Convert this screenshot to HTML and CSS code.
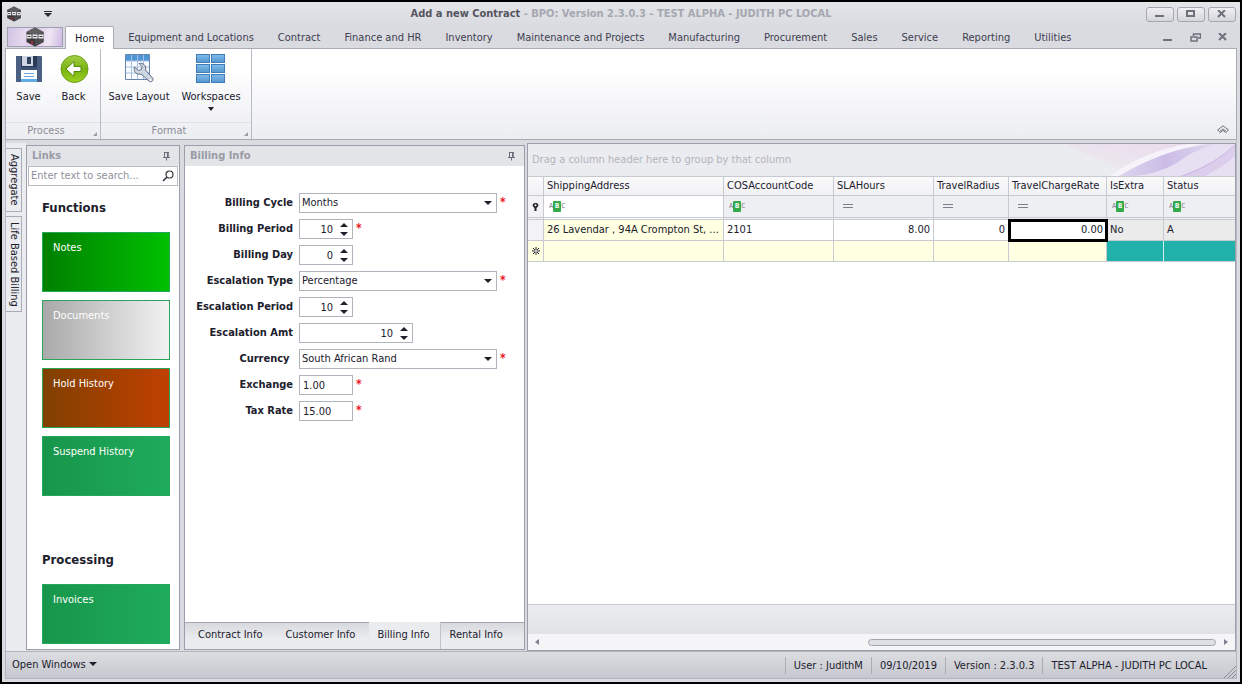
FILE: index.html
```html
<!DOCTYPE html>
<html lang="en">
<head>
    <meta charset="UTF-8">
    <meta name="viewport" content="width=device-width, initial-scale=1.0">
    <title>Add a new Contract - BPO</title>
    <link rel="stylesheet" href="styles.css">
</head>
<body>
    <!-- shared icons -->
    <svg class="defs" width="0" height="0">
        <symbol id="logo" viewBox="0 0 20 20">
            <path d="M10 0.5 18.5 5v10L10 19.5 1.5 15V5z" fill="#3a3a3c"/>
            <path d="M10 0.5 18.5 5 10 9 1.5 5z" fill="#606063"/>
            <path d="M10 9 18.5 5v10L10 19.5z" fill="#4b4b4e"/>
            <path d="M1.500 7.500h5v4h-5zM7.500 7.500h5v4h-5zM13.500 7.500h5v4h-5z" fill="#e8e8ea"/>
            <path d="M2.500 9h3v1h-3zM8.500 9h3v1h-3zM14.500 9h3v1h-3z" fill="#3a3a3c"/>
            <path d="M6 14l2 3M8 14l-2 3" stroke="#a83038" stroke-width="1.200"/>
        </symbol>
        <symbol id="pin" viewBox="0 0 9 9">
            <path d="M2 .5h5M2.500 .5v5M6 .5v5M1 5.500h7M4.500 5.500v3" fill="none" stroke="#6a6d7a"/>
            <path d="M5 1h1.500v4H5z" fill="#6a6d7a"/>
        </symbol>
        <symbol id="equals" viewBox="0 0 10 5">
            <path d="M0 .5h10M0 3.500h10" stroke="#7d808c"/>
        </symbol>
    </svg>

    <div class="window">
        <header class="titlebar">
            <div class="quick-access">
                <svg width="16" height="16"><use href="#logo"/></svg>
                <button class="icon-btn" aria-label="Customize toolbar"><svg width="8" height="6" viewBox="0 0 8 6"><path d="M0 0h8v1H0zM0 2h8L4 6z" fill="#2b2b35"/></svg></button>
            </div>
            <h1 class="title">Add a new Contract <span>- BPO: Version 2.3.0.3 - TEST ALPHA - JUDITH PC LOCAL</span></h1>
            <div class="window-buttons">
                <button aria-label="Minimize"><svg width="10" height="8" viewBox="0 0 10 8"><path d="M0 5h9v2H0z" fill="#6e717c"/></svg></button>
                <button aria-label="Maximize"><svg width="10" height="8" viewBox="0 0 10 8"><path d="M1 1h7v5H1z" fill="none" stroke="#6e717c" stroke-width="2"/></svg></button>
                <button aria-label="Close"><svg width="10" height="8" viewBox="0 0 10 8"><path d="M1 0l7 7M8 0L1 7" stroke="#6e717c" stroke-width="2"/></svg></button>
            </div>
        </header>

        <nav class="ribbon-tabs">
            <button class="app-button" aria-label="BPO"><svg width="20" height="20"><use href="#logo"/></svg></button>
            <button class="ribbon-tab active">Home</button>
            <button class="ribbon-tab">Equipment and Locations</button>
            <button class="ribbon-tab">Contract</button>
            <button class="ribbon-tab">Finance and HR</button>
            <button class="ribbon-tab">Inventory</button>
            <button class="ribbon-tab">Maintenance and Projects</button>
            <button class="ribbon-tab">Manufacturing</button>
            <button class="ribbon-tab">Procurement</button>
            <button class="ribbon-tab">Sales</button>
            <button class="ribbon-tab">Service</button>
            <button class="ribbon-tab">Reporting</button>
            <button class="ribbon-tab">Utilities</button>
            <div class="mdi-buttons">
                <button class="icon-btn" aria-label="Minimize document"><svg width="10" height="9" viewBox="0 0 10 9"><path d="M0 6h9v2H0z" fill="#6e717c"/></svg></button>
                <button class="icon-btn" aria-label="Restore document"><svg width="11" height="9" viewBox="0 0 11 9"><path d="M3.500 3V1h7v4H8M1 4h6v4H1z" fill="none" stroke="#6e717c" stroke-width="1.500"/></svg></button>
                <button class="icon-btn" aria-label="Close document"><svg width="10" height="8" viewBox="0 0 10 8"><path d="M1 0l7 7M8 0L1 7" stroke="#6e717c" stroke-width="2"/></svg></button>
            </div>
        </nav>

        <section class="ribbon">
            <div class="ribbon-group process">
                <div class="ribbon-items">
                    <button class="ribbon-item">
                        <svg width="32" height="32" viewBox="0 0 32 32">
                            <path d="M3 3h25l1 1v25H3z" fill="#3e5274"/>
                            <path d="M3 3h5v26H3zM24 3h4l1 1v25h-5z" fill="#4b5f82"/>
                            <path d="M8 3h16v11H8z" fill="#2b3a55"/>
                            <path d="M9 3h11v10H9z" fill="#cdd6e2"/>
                            <path d="M14 4h4v7h-4z" fill="#33425e"/>
                            <path d="M8 17h16v12H8z" fill="#fbfcfe"/>
                            <path d="M8 26h16v3H8z" fill="#60ace4"/>
                            <path d="M11 20.500h10M11 23.500h10" stroke="#6fa5dc"/>
                        </svg>
                        <span>Save</span>
                    </button>
                    <button class="ribbon-item">
                        <svg width="32" height="32" viewBox="0 0 32 32">
                            <defs><linearGradient id="green" x1="0" y1="0" x2="0" y2="1"><stop offset="0" stop-color="#a5cf45"/><stop offset=".5" stop-color="#79b312"/><stop offset="1" stop-color="#9bd020"/></linearGradient></defs>
                            <circle cx="16.500" cy="16" r="13.500" fill="url(#green)" stroke="#6b9f1c"/>
                            <path d="M8 16l8-7.500v5h7v5h-7v5z" fill="#fff" stroke="#55870d" stroke-linejoin="round"/>
                        </svg>
                        <span>Back</span>
                    </button>
                </div>
                <div class="group-caption">Process</div>
            </div>
            <div class="ribbon-group format">
                <div class="ribbon-items">
                    <button class="ribbon-item wide">
                        <svg width="32" height="32" viewBox="0 0 32 32">
                            <path d="M2.500 1.500h24v25h-24z" fill="#f7faff" stroke="#6884ad"/>
                            <path d="M3 2h23v6H3z" fill="#4f97d4"/>
                            <path d="M3 8h23M3 14h23M3 20h23M8.500 2v24M14.500 2v24M20.500 2v24" stroke="#a9c0e0"/>
                            <path d="M16 10.500c4-1 7.500 2 6.500 6.500l7 8c1.800 2.500-1.500 5-3.500 3l-8-7c-4 1-8-2-6.500-7l4 3.500 3-1 .5-3z" fill="#cdd5e1" stroke="#5f6e85" stroke-linejoin="round"/>
                            <circle cx="27.500" cy="27" r="1" fill="#fff"/>
                        </svg>
                        <span>Save Layout</span>
                    </button>
                    <button class="ribbon-item wide">
                        <svg width="32" height="32" viewBox="0 0 32 32">
                            <defs><linearGradient id="blue" x1="0" y1="0" x2="0" y2="1"><stop offset="0" stop-color="#82bdea"/><stop offset="1" stop-color="#5496d0"/></linearGradient></defs>
                            <g fill="url(#blue)" stroke="#3f7cb8">
                                <rect x="1.500" y="1.500" width="13" height="8"/><rect x="16.500" y="1.500" width="13" height="8"/>
                                <rect x="1.500" y="11.500" width="13" height="8"/><rect x="16.500" y="11.500" width="13" height="8"/>
                                <rect x="1.500" y="21.500" width="13" height="8"/><rect x="16.500" y="21.500" width="13" height="8"/>
                            </g>
                        </svg>
                        <span>Workspaces</span>
                        <i class="caret"></i>
                    </button>
                </div>
                <div class="group-caption">Format</div>
            </div>
            <button class="icon-btn collapse" aria-label="Collapse the ribbon"><svg width="12" height="9" viewBox="0 0 12 9"><path d="M.5 5L6 .8 11.500 5 9.500 6.500 6 4 2.500 6.500zM2.500 8L6 5.500 9.500 8" fill="none" stroke="#70737e"/></svg></button>
        </section>

        <main class="workspace">
            <div class="side-tabs">
                <button class="side-tab">Aggregate</button>
                <button class="side-tab">Life Based Billing</button>
            </div>

            <aside class="panel links">
                <div class="panel-head"><h2>Links</h2><svg width="9" height="9"><use href="#pin"/></svg></div>
                <div class="search">
                    <input type="text" placeholder="Enter text to search..." aria-label="Search links">
                    <svg width="12" height="12" viewBox="0 0 12 12"><circle cx="7.500" cy="4.500" r="3.500" fill="none" stroke="#33333d" stroke-width="1.200"/><path d="M5 7L1 11" stroke="#33333d" stroke-width="1.600"/></svg>
                </div>
                <div class="links-body">
                    <h3>Functions</h3>
                    <div class="tiles">
                        <button class="tile notes">Notes</button>
                        <button class="tile documents">Documents</button>
                        <button class="tile hold">Hold History</button>
                        <button class="tile">Suspend History</button>
                    </div>
                    <h3>Processing</h3>
                    <div class="tiles">
                        <button class="tile">Invoices</button>
                    </div>
                </div>
            </aside>

            <section class="panel billing">
                <div class="panel-head"><h2>Billing Info</h2><svg width="9" height="9"><use href="#pin"/></svg></div>
                <form class="billing-form">
                    <div class="field required">
                        <label for="cycle">Billing Cycle</label>
                        <div class="combo"><select id="cycle"><option>Months</option></select></div>
                    </div>
                    <div class="field required">
                        <label for="period">Billing Period</label>
                        <div class="spin"><input id="period" type="number" value="10"></div>
                    </div>
                    <div class="field">
                        <label for="day">Billing Day</label>
                        <div class="spin"><input id="day" type="number" value="0"></div>
                    </div>
                    <div class="field required">
                        <label for="esc-type">Escalation Type</label>
                        <div class="combo"><select id="esc-type"><option>Percentage</option></select></div>
                    </div>
                    <div class="field">
                        <label for="esc-period">Escalation Period</label>
                        <div class="spin"><input id="esc-period" type="number" value="10"></div>
                    </div>
                    <div class="field">
                        <label for="esc-amt">Escalation Amt</label>
                        <div class="spin amount"><input id="esc-amt" type="number" value="10"></div>
                    </div>
                    <div class="field required">
                        <label for="currency">Currency&nbsp;</label>
                        <div class="combo"><select id="currency"><option>South African Rand</option></select></div>
                    </div>
                    <div class="field required">
                        <label for="exchange">Exchange</label>
                        <input class="short" id="exchange" type="text" value="1.00">
                    </div>
                    <div class="field required">
                        <label for="tax">Tax Rate</label>
                        <input class="short" id="tax" type="text" value="15.00">
                    </div>
                </form>
                <div class="page-tabs">
                    <button class="page-tab">Contract Info</button>
                    <button class="page-tab">Customer Info</button>
                    <button class="page-tab active">Billing Info</button>
                    <button class="page-tab last">Rental Info</button>
                </div>
            </section>

            <section class="grid">
                <div class="group-panel">
                    <span>Drag a column header here to group by that column</span>
                    <svg class="swoosh" width="170" height="32" viewBox="0 0 170 32">
                        <defs>
                            <linearGradient id="pink" x1="0" x2="1" y1="1" y2="0"><stop offset="0" stop-color="#ebecef"/><stop offset="1" stop-color="#ecd0ea"/></linearGradient>
                            <linearGradient id="violet" x1="0" x2="1" y1="0" y2="0"><stop offset="0" stop-color="#ddd6ef"/><stop offset=".5" stop-color="#cbbce6"/><stop offset="1" stop-color="#e0d8f0"/></linearGradient>
                        </defs>
                        <path d="M0 0h124Q84 10 56 26 30 14 0 0z" fill="url(#pink)" opacity=".6"/>
                        <path d="M44 32Q84 6 128 0h42v32z" fill="#e6e0f2"/>
                        <path d="M52 32Q90 6 150 0 128 6 112 19 92 30 70 32z" fill="url(#violet)"/>
                        <path d="M44 32Q82 6 124 0h14Q94 8 54 32z" fill="#f6f4fa"/>
                        <path d="M114 32Q148 22 170 2v10Q156 24 140 32z" fill="#dccdec"/>
                        <path d="M118 32Q150 20 170 1" fill="none" stroke="#c9b3e2" stroke-width="1"/>
                    </svg>
                </div>
                <div class="grid-body">
                    <table>
                        <colgroup>
                            <col class="c-mark"><col class="c-address"><col class="c-code"><col class="c-hours">
                            <col class="c-radius"><col class="c-rate"><col class="c-extra"><col>
                        </colgroup>
                        <thead>
                            <tr>
                                <th></th>
                                <th>ShippingAddress</th>
                                <th>COSAccountCode</th>
                                <th>SLAHours</th>
                                <th>TravelRadius</th>
                                <th>TravelChargeRate</th>
                                <th>IsExtra</th>
                                <th>Status</th>
                            </tr>
                            <tr class="filter-row">
                                <td class="mark"><svg width="7" height="8" viewBox="0 0 7 8"><path d="M3.500 0C6 0 7 2 6 3.500L4.500 5v3h-2V5L1 3.500C0 2 1 0 3.500 0z" fill="#22222c"/><circle cx="3.500" cy="2.200" r="1" fill="#fff"/></svg></td>
                                <td class="focused"><span class="abc">A<b>B</b>C</span></td>
                                <td><span class="abc">A<b>B</b>C</span></td>
                                <td><svg class="eq" width="10" height="5"><use href="#equals"/></svg></td>
                                <td><svg class="eq" width="10" height="5"><use href="#equals"/></svg></td>
                                <td><svg class="eq" width="10" height="5"><use href="#equals"/></svg></td>
                                <td><span class="abc">A<b>B</b>C</span></td>
                                <td><span class="abc">A<b>B</b>C</span></td>
                            </tr>
                        </thead>
                        <tbody>
                            <tr>
                                <td class="mark"></td>
                                <td class="editable">26 Lavendar , 94A Crompton St, ...</td>
                                <td>2101</td>
                                <td class="num">8.00</td>
                                <td class="num">0</td>
                                <td class="num current">0.00</td>
                                <td class="locked">No</td>
                                <td class="locked">A</td>
                            </tr>
                            <tr class="new-row">
                                <td class="mark"><svg width="8" height="8" viewBox="0 0 8 8"><path d="M4 0v8M0 4h8M1 1l6 6M7 1L1 7" stroke="#22222c"/><circle cx="4" cy="4" r="1" fill="#fff"/></svg></td>
                                <td></td><td></td><td></td><td></td><td></td>
                                <td class="teal"></td>
                                <td class="teal"></td>
                            </tr>
                        </tbody>
                    </table>
                </div>
                <div class="grid-footer"></div>
                <div class="scrollbar">
                    <i class="arrow left"></i>
                    <div class="track"><div class="thumb"></div></div>
                    <i class="arrow right"></i>
                </div>
            </section>
        </main>

        <footer class="statusbar">
            <button class="open-windows">Open Windows <i class="caret"></i></button>
            <div class="status-items">
                <span>User : JudithM</span>
                <span>09/10/2019</span>
                <span>Version : 2.3.0.3</span>
                <span>TEST ALPHA - JUDITH PC LOCAL</span>
            </div>
            <svg class="grip" width="12" height="12" viewBox="0 0 12 12"><path d="M0 12L12 0M4 12l8-8M8 12l4-4" stroke="#8b8e99"/></svg>
        </footer>
    </div>
</body>
</html>
```
FILE: styles.css
```css
* {
    box-sizing: border-box;
}

body {
    margin: 0;
    font-family: "DejaVu Sans Condensed", "DejaVu Sans", sans-serif;
    font-size: 11px;
    line-height: 14px;
    color: #20202c;
}

button,
input,
select {
    font: inherit;
    color: inherit;
    margin: 0;
    padding: 0;
    border: none;
    background: none;
    outline: none;
}

h1,
h2,
h3 {
    margin: 0;
    font-size: 11px;
}

svg {
    display: block;
    flex: none;
}

.defs {
    position: absolute;
}

.window {
    display: flex;
    flex-direction: column;
    height: 100vh;
    padding: 0 3px 3px;
    border: 2px solid #000;
    background: #dadbe0;
}

.caret {
    display: inline-block;
    border: 3px solid transparent;
    border-top: 4px solid #20202c;
    border-bottom: none;
}

.icon-btn {
    display: flex;
    align-items: center;
    justify-content: center;
}

/* title bar */
.titlebar {
    display: flex;
    align-items: center;
    height: 24px;
    margin: 0 -3px;
    padding: 0 4px;
    background: linear-gradient(#e4e5e9, #dadbe0);
}

.quick-access {
    display: flex;
    align-items: center;
    gap: 22px;
    width: 90px;
}

.title {
    flex: 1;
    text-align: center;
    color: #55565f;
    white-space: nowrap;
}

.title span {
    color: #a5a7b0;
}

.window-buttons {
    display: flex;
    gap: 3px;
}

.window-buttons button {
    display: flex;
    align-items: center;
    justify-content: center;
    width: 28px;
    height: 15px;
    border: 1px solid #a5a7b0;
    border-radius: 3px;
    background: linear-gradient(#f0f0f3, #d5d6db);
}

/* ribbon */
.ribbon-tabs {
    display: flex;
    height: 22px;
    padding-left: 2px;
    z-index: 1;
}

.app-button {
    display: flex;
    align-items: center;
    justify-content: center;
    width: 56px;
    height: 20px;
    margin: 1px 2px 0 0;
    border: 1px solid #a09db4;
    background: linear-gradient(100deg, #cfc2e4, #e6d9ee 30%, #dcc6e6 50%, #f0e6f4 75%, #cdb9e4);
}

.ribbon-tab {
    padding: 2px 12px 0;
    color: #3e3e50;
    white-space: nowrap;
}

.ribbon-tab.active {
    height: 23px;
    padding: 2px 9px 0;
    margin-right: 2px;
    border: 1px solid #a9abb5;
    border-bottom: none;
    border-radius: 2px 2px 0 0;
    background: #fff;
    color: #20202c;
}

.mdi-buttons {
    display: flex;
    gap: 17px;
    margin-left: auto;
    padding-right: 9px;
}

.ribbon {
    display: flex;
    height: 92px;
    border: 1px solid #a9abb5;
    background: linear-gradient(#fff 20%, #ecedf1);
}

.ribbon-group {
    display: flex;
    flex-direction: column;
    justify-content: space-between;
    position: relative;
    border-right: 1px solid #b9bbc4;
}

.ribbon-items {
    display: flex;
    padding: 4px 4px 0 0;
}

.ribbon-item {
    display: flex;
    flex-direction: column;
    align-items: center;
    width: 45px;
    white-space: nowrap;
}

.ribbon-item.wide {
    width: 72px;
}

.ribbon-item span {
    margin-top: 5px;
}

.ribbon-item .caret {
    margin-top: 3px;
}

.format .ribbon-items {
    padding-left: 2px;
}

.group-caption {
    padding-right: 14px;
    border-top: 1px solid #e0e1e6;
    text-align: center;
    line-height: 16px;
    color: #8c8e99;
}

.ribbon-group::after {
    content: "";
    position: absolute;
    right: 3px;
    bottom: 3px;
    border: 2px solid;
    border-color: transparent #9a9ca6 #9a9ca6 transparent;
}

.collapse {
    align-self: flex-end;
    margin: 0 7px 5px auto;
}

/* docked panels */
.workspace {
    display: flex;
    flex: 1;
    min-height: 0;
    padding-top: 3px;
    border-right: 1px solid #b9bbc4;
    border-left: 1px solid #b9bbc4;
    background: #dadbe0;
}

.side-tabs {
    display: flex;
    flex-direction: column;
    align-items: flex-start;
    gap: 4px;
    width: 20px;
    padding-top: 5px;
    background: #ebecef;
}

.side-tab {
    width: 16px;
    padding: 5px 0;
    border: 1px solid #a9abb5;
    border-left: none;
    writing-mode: vertical-rl;
    line-height: 14px;
    white-space: nowrap;
}

.panel {
    display: flex;
    flex-direction: column;
    flex: none;
    margin: 2px 4px 1px 0;
    border: 1px solid #9c9eac;
    background: #fff;
    overflow: hidden;
}

.panel-head {
    display: flex;
    align-items: center;
    justify-content: space-between;
    flex: none;
    height: 20px;
    padding: 0 8px 0 5px;
    background: #e3e4e8;
    color: #999ba6;
}

.links {
    width: 154px;
}

.search {
    display: flex;
    align-items: center;
    flex: none;
    height: 20px;
    margin: 0 1px;
    padding: 0 3px 0 2px;
    border: 1px solid #b9bbc4;
}

.search input {
    flex: 1;
    min-width: 0;
}

.search input::placeholder {
    color: #8f919c;
    opacity: 1;
}

.links-body {
    flex: 1;
    min-height: 0;
    padding: 12px 9px 0 15px;
}

.links-body h3 {
    font-size: 13px;
    line-height: 20px;
}

.tiles {
    display: grid;
    gap: 8px;
    margin: 14px 0 54px;
}

.tiles:last-child {
    margin-bottom: 0;
}

.tile {
    height: 60px;
    padding: 8px 10px;
    border: 1px solid #26a65b;
    background: linear-gradient(90deg, #17964a, #1fac5c);
    color: #fff;
    display: flex;
    align-items: flex-start;
}

.tile.notes {
    background: linear-gradient(90deg, #008000, #00c000);
}

.tile.documents {
    background: linear-gradient(90deg, #a9a9a9, #f2f2f2);
}

.tile.hold {
    background: linear-gradient(90deg, #804000, #c04000);
}

/* billing form */
.billing {
    width: 341px;
    margin-right: 2px;
}

.billing-form {
    display: grid;
    gap: 6px;
    padding-top: 27px;
}

.field {
    display: flex;
    align-items: center;
    height: 20px;
}

.field label {
    width: 108px;
    margin-right: 6px;
    font-weight: bold;
    text-align: right;
}

.field.required::after {
    content: "*";
    align-self: flex-start;
    margin-left: 3px;
    font-size: 12px;
    line-height: 18px;
    font-weight: bold;
    color: #f01820;
}

.combo,
.spin {
    position: relative;
}

.combo select,
.spin input,
.short {
    display: block;
    height: 20px;
    border: 1px solid #b1b3bd;
    background: #fff;
}

.combo select {
    width: 198px;
    padding-left: 2px;
    appearance: none;
}

.combo::after {
    content: "";
    position: absolute;
    top: 8px;
    right: 5px;
    border: 4px solid transparent;
    border-top-color: #20202c;
    border-bottom: none;
    pointer-events: none;
}

.spin input,
.short {
    width: 54px;
}

.spin input {
    padding-right: 19px;
    text-align: right;
    appearance: textfield;
}

.spin input::-webkit-inner-spin-button {
    appearance: none;
    margin: 0;
}

.spin.amount input {
    width: 114px;
}

.short {
    padding-left: 3px;
}

.spin::before,
.spin::after {
    content: "";
    position: absolute;
    right: 5px;
    border: 4px solid transparent;
    pointer-events: none;
}

.spin::before {
    top: 4px;
    border-top: none;
    border-bottom-color: #20202c;
}

.spin::after {
    bottom: 3px;
    border-bottom: none;
    border-top-color: #20202c;
}

.page-tabs {
    display: flex;
    height: 27px;
    margin-top: auto;
    background: #ebecef;
}

.page-tab {
    padding: 0 14px 3px 9px;
    border-top: 1px solid #a3a5b0;
    background: linear-gradient(#d8d9de, #ebecef 60%);
    white-space: nowrap;
}

.page-tab:first-child {
    padding-left: 13px;
}

.page-tab.active {
    padding: 0 10px 2px 8px;
    border: none;
    background: none;
}

.page-tab.last {
    flex: 1;
    border-left: 1px solid #c0c2ca;
    text-align: left;
}

/* data grid */
.grid {
    display: flex;
    flex-direction: column;
    flex: 1;
    min-width: 0;
    border: 1px solid #9c9eac;
    background: #fff;
}

.group-panel {
    display: flex;
    align-items: center;
    position: relative;
    height: 32px;
    padding-left: 4px;
    background: #ebecef;
    color: #b2b4bd;
}

.swoosh {
    position: absolute;
    top: 0;
    right: 0;
}

.grid-body {
    flex: 1;
    min-height: 0;
    overflow: hidden;
}

table {
    width: 100%;
    table-layout: fixed;
    border-collapse: separate;
    border-spacing: 0;
}

.c-mark { width: 16px; }
.c-address { width: 180px; }
.c-code { width: 110px; }
.c-hours { width: 100px; }
.c-radius { width: 75px; }
.c-rate { width: 98px; }
.c-extra { width: 57px; }

th,
td {
    height: 21px;
    padding: 0 3px;
    border-right: 1px solid #c8cad2;
    border-bottom: 1px solid #c8cad2;
    text-align: left;
    white-space: nowrap;
}

th {
    height: 20px;
    padding-right: 0;
    border-top: 1px solid #c8cad2;
    background: linear-gradient(#fafafb, #f1f1f4);
    font-weight: normal;
}

th:last-child,
td:last-child {
    border-right: none;
}

.filter-row td {
    height: 24px;
    padding-left: 5px;
    border-bottom: 3px double #c8cad2;
    background: #eeeff2;
}

.filter-row .focused {
    background: #fff;
}

.filter-row .eq {
    margin-left: 4px;
}

.abc {
    display: flex;
    align-items: center;
    font-family: "DejaVu Sans Mono", monospace;
    font-size: 7px;
    line-height: 11px;
    color: #7d808c;
}

.abc b {
    width: 8px;
    border-radius: 1px;
    background: #35a84a;
    text-align: center;
    color: #fff;
}

td.mark,
.filter-row .mark {
    padding: 0 0 0 4px;
    background: #f3f3f6;
}

.editable {
    padding-right: 0;
}

.editable,
.new-row td {
    background: #ffffe1;
}

.num {
    text-align: right;
}

.current {
    outline: 3px solid #000;
    outline-offset: -2px;
}

.locked {
    background: #ebebeb;
}

.new-row .teal {
    border-right-color: #d5eeec;
    background: #20b2aa;
}

.grid-footer {
    height: 30px;
    border-top: 1px solid #c8cad2;
    background: linear-gradient(#ebecef, #e1e2e6);
}

.scrollbar {
    display: flex;
    align-items: center;
    height: 16px;
    padding: 0 7px;
    background: #f5f5f7;
}

.track {
    flex: 1;
    padding: 0 8px;
}

.thumb {
    width: 52%;
    height: 7px;
    margin-left: auto;
    border: 1px solid #a3a5b0;
    border-radius: 4px;
    background: #dfe0e5;
}

.arrow {
    border: 3px solid transparent;
}

.arrow.left {
    border-right: 4px solid #7d808c;
    border-left: none;
}

.arrow.right {
    border-left: 4px solid #7d808c;
    border-right: none;
}

/* status bar */
.statusbar {
    display: flex;
    align-items: center;
    height: 28px;
    padding-left: 6px;
    border: 1px solid #b1b3bd;
    background: linear-gradient(#dcdde1, #c7c8cf);
}

.open-windows .caret {
    border-width: 4px 4px 0;
    vertical-align: 2px;
}

.status-items {
    display: flex;
    margin-left: auto;
}

.status-items span {
    padding: 0 8px;
    border-left: 1px solid #a9abb5;
    line-height: 17px;
    white-space: nowrap;
}

.grip {
    align-self: flex-end;
    margin-left: 9px;
}
```
